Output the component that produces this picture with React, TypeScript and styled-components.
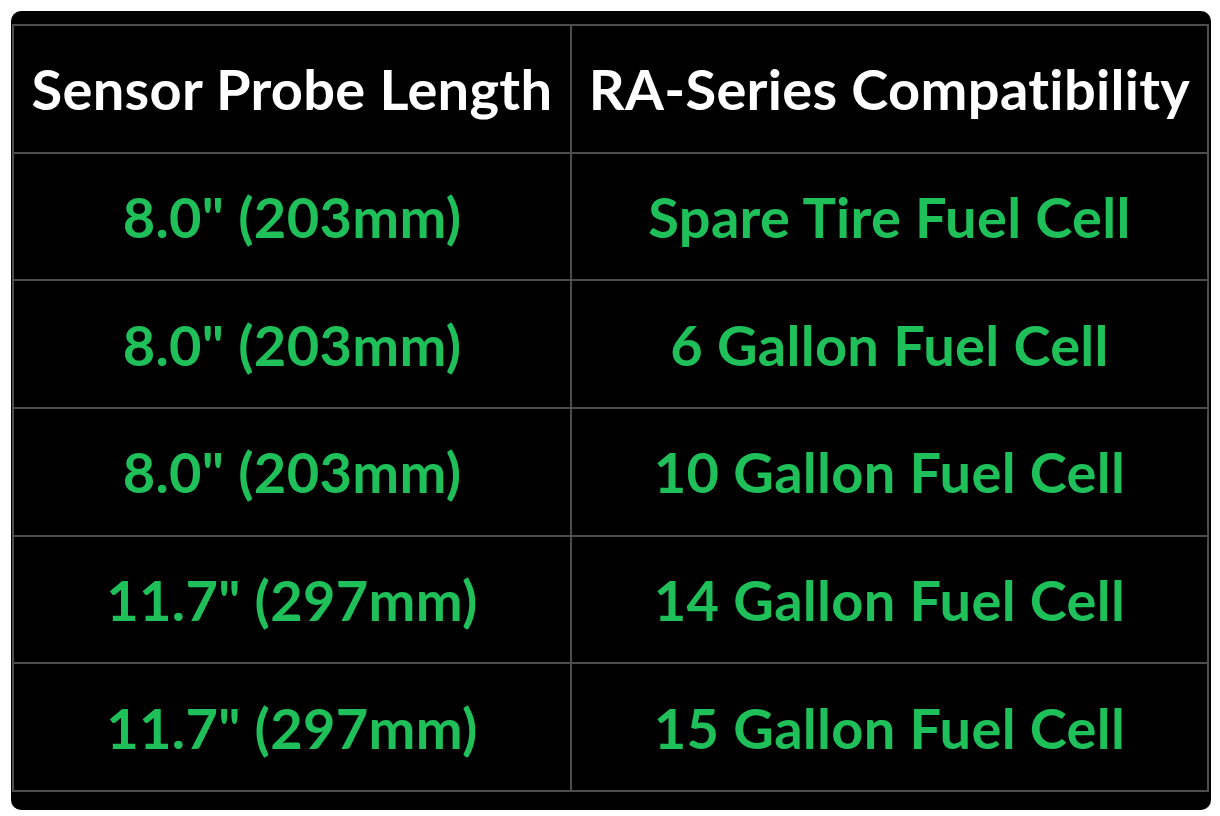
import React from "react";
import styled, { createGlobalStyle } from "styled-components";

const Global = createGlobalStyle`
  html, body { margin: 0; padding: 0; background: #ffffff; }
  body { font-family: Lato, "Open Sans", sans-serif; }
`;

const Card = styled.div`
  margin: 11px;
  width: 1200px;
  height: 799px;
  box-sizing: border-box;
  background: #000;
  border-radius: 10px;
  padding: 13px 2px 18px 1px;
`;

const Grid = styled.div`
  display: grid;
  grid-template-columns: 556px 635px;
  grid-auto-rows: 1fr;
  gap: 2px;
  padding: 2px;
  height: 100%;
  box-sizing: border-box;
  background: #4d4d4d;
`;

const Cell = styled.div<{ $head?: boolean }>`
  background: #000;
  display: flex;
  align-items: center;
  justify-content: center;
  font-family: Lato, "Open Sans", sans-serif;
  font-weight: 700;
  font-size: 56px;
  letter-spacing: 0.3px;
  color: ${(p) => (p.$head ? "#ffffff" : "#1fbf5a")};
  white-space: nowrap;
`;

const rows: [string, string][] = [
  ['8.0" (203mm)', "Spare Tire Fuel Cell"],
  ['8.0" (203mm)', "6 Gallon Fuel Cell"],
  ['8.0" (203mm)', "10 Gallon Fuel Cell"],
  ['11.7" (297mm)', "14 Gallon Fuel Cell"],
  ['11.7" (297mm)', "15 Gallon Fuel Cell"],
];

export default function App() {
  return (
    <>
      <Global />
      <Card>
        <Grid>
          <Cell $head>Sensor Probe Length</Cell>
          <Cell $head>RA-Series Compatibility</Cell>
          {rows.map(([a, b], i) => (
            <React.Fragment key={i}>
              <Cell>{a}</Cell>
              <Cell>{b}</Cell>
            </React.Fragment>
          ))}
        </Grid>
      </Card>
    </>
  );
}
